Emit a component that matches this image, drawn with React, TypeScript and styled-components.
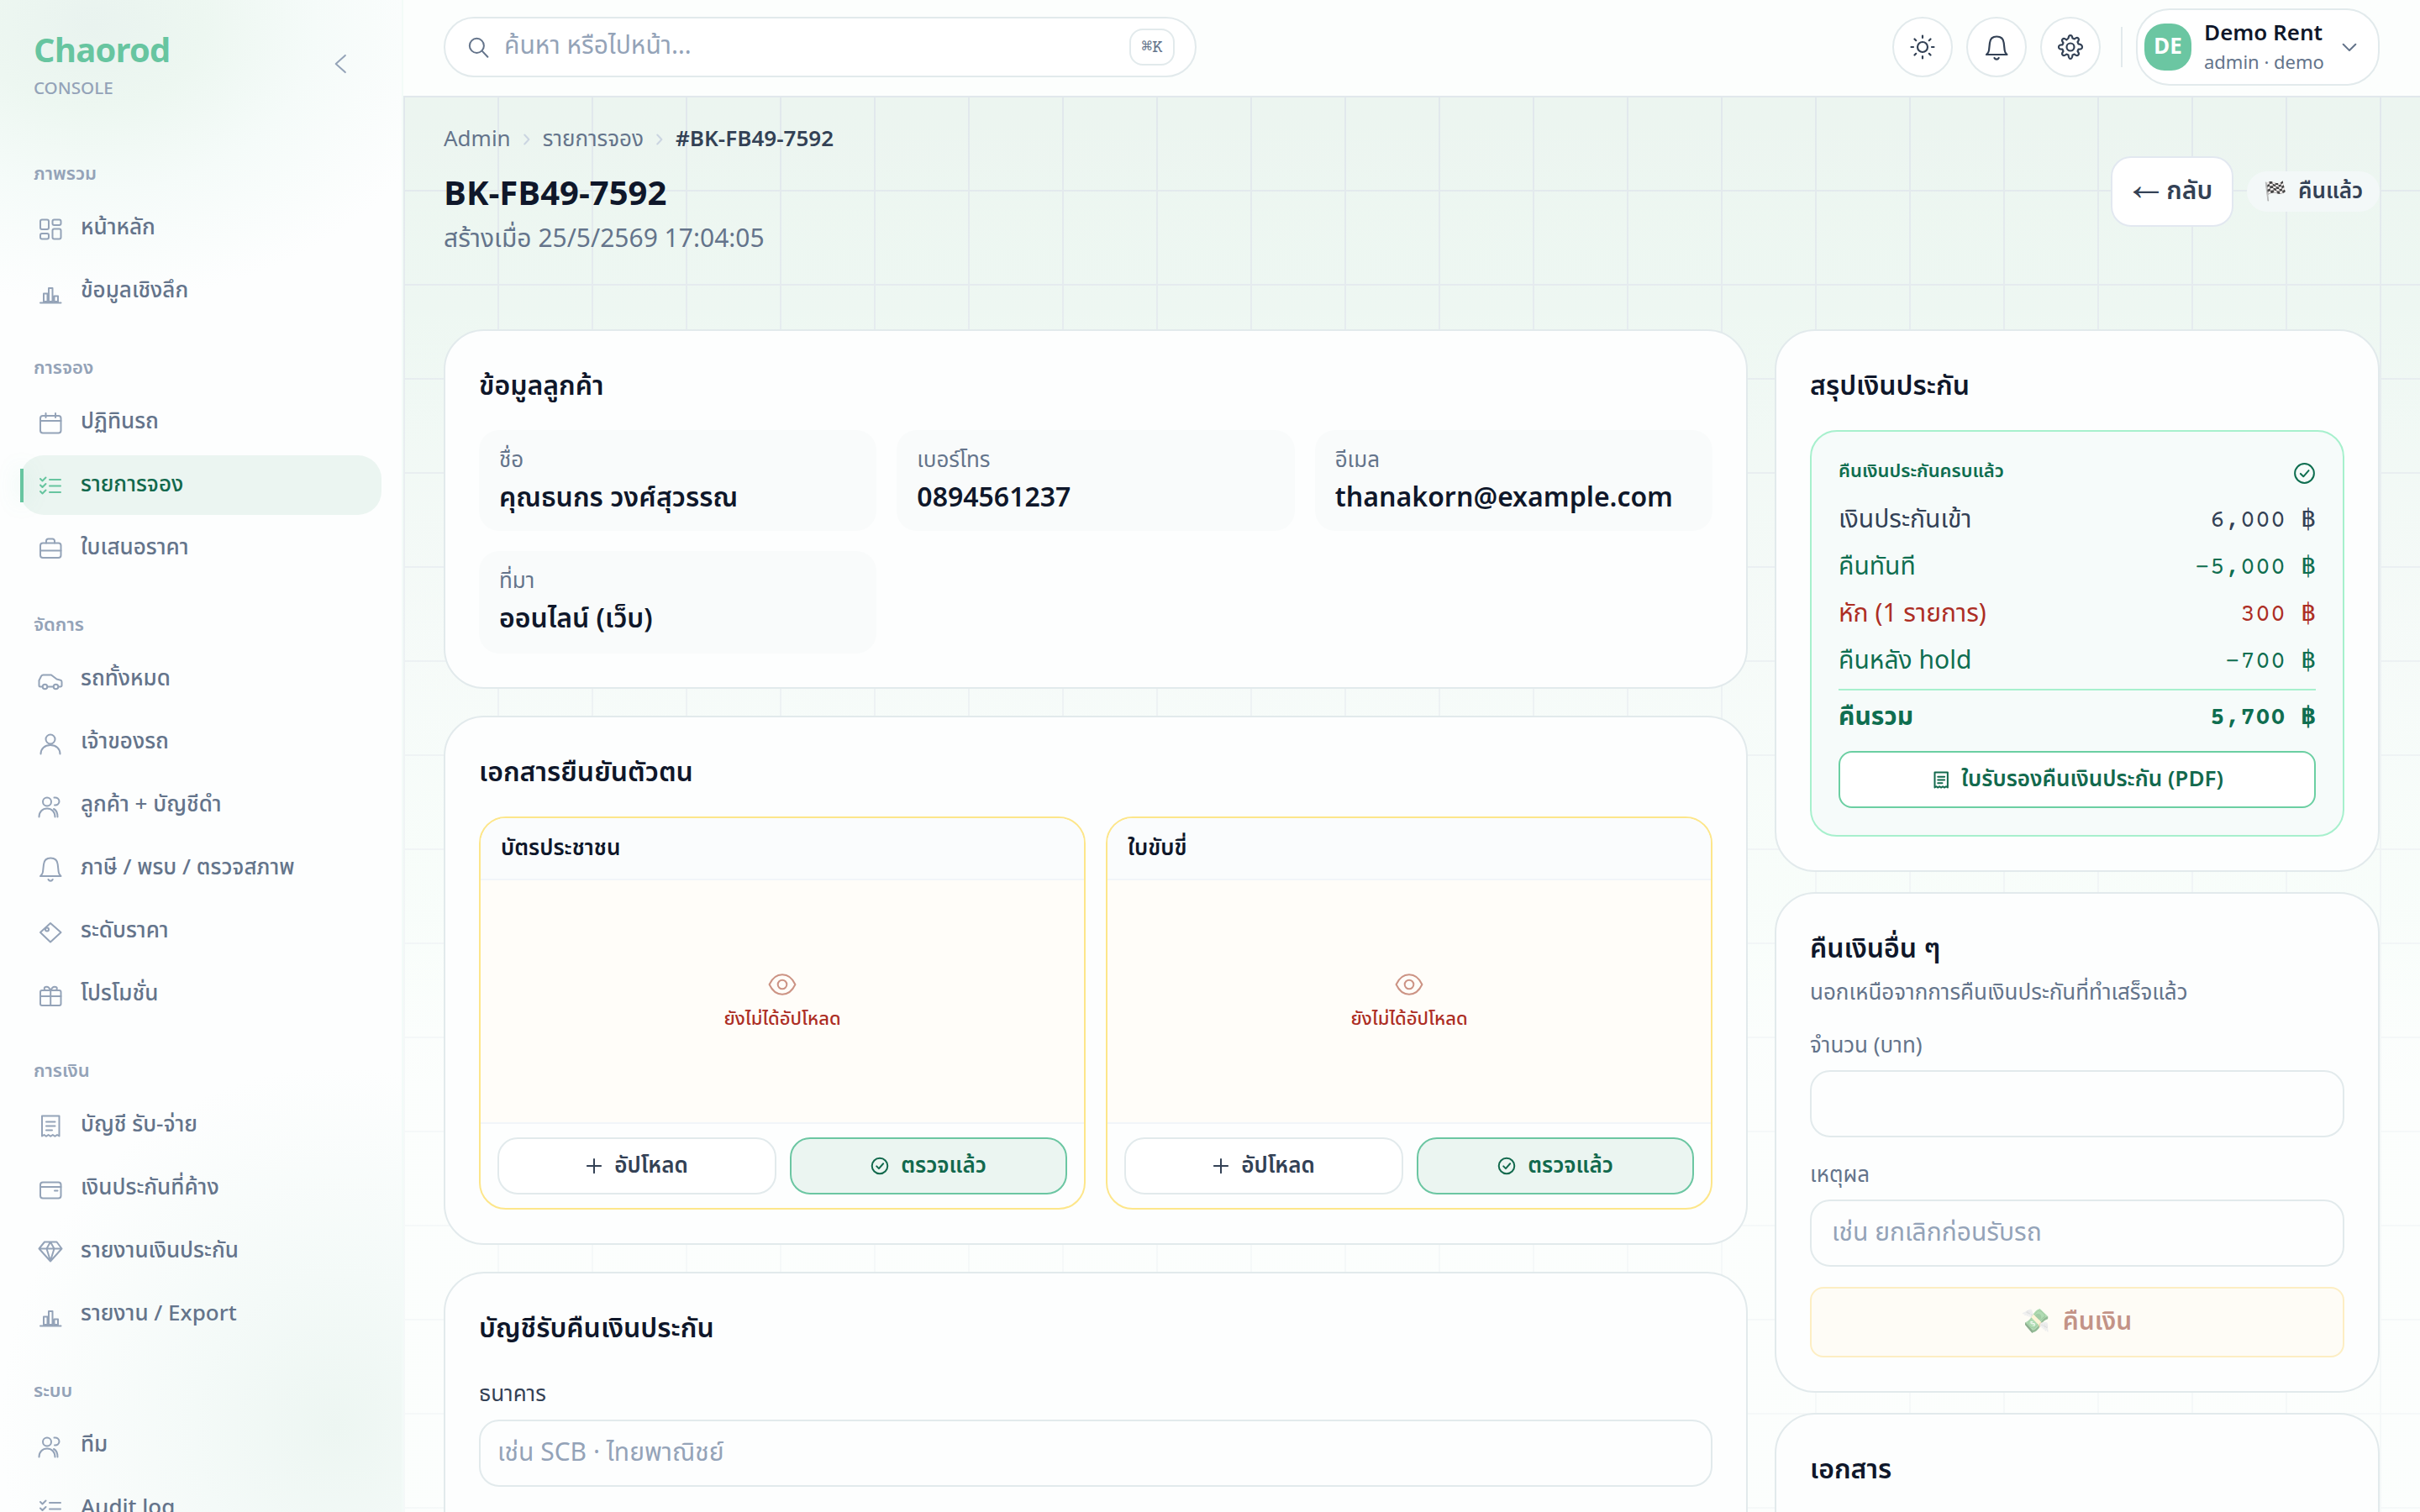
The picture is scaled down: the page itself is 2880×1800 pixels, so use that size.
import {ReactNode} from "react";
import styled, {createGlobalStyle} from "styled-components";

const sans = `"Noto Sans Thai", "Noto Sans", sans-serif`;
const mono = `"Courier Prime", "DejaVu Sans Mono", "Liberation Mono", monospace`;
const money = `"Courier Prime", FreeSans, "Noto Sans", "Liberation Mono", monospace`;

type IconProps = { name: string; size?: number; stroke?: number };

// every glyph is drawn on a 32 unit canvas
const shapes: Record<string, ReactNode> = {
	grid: <><rect x="4" y="5.500" width="10" height="11.500" rx="2" /><rect x="18.500" y="5.500" width="10" height="6.500" rx="2" /><rect x="4" y="22" width="10" height="6.500" rx="2" /><rect x="18.500" y="16.500" width="10" height="12" rx="2" /></>,
	chart: <path d="M4 29.500h24.500M8 28V18.500h4.500V28zM14 28V12h4.500v16zM20.500 28v-6.500H25V28z" />,
	calendar: <><rect x="4" y="8" width="24.500" height="20.500" rx="3" /><path d="M4 14h24.500M10.500 5v5M22 5v5" /></>,
	list: <path d="M4 8l2.500 2.500 4-4M4 15.500L6.500 18l4-4M4 23l2.500 2.500 4-4M15 9h13M15 16.500h13M15 24h13" />,
	briefcase: <><rect x="4" y="9.500" width="24.500" height="17.500" rx="3" /><path d="M4 18.500h24.500M11 9.500V7a2.500 2.500 0 012.500-2.500h5A2.500 2.500 0 0121 7v2.500" /></>,
	car: <><path d="M6.500 24.500H4a1.500 1.500 0 01-1.500-1.500v-6l2.500-5a3 3 0 012.500-1.500h9.500l6.500 5 4.500 1.200a2 2 0 011.500 2V23a1.500 1.500 0 01-1.500 1.500h-2M12.500 24.500h7" /><circle cx="9.500" cy="24.500" r="2.800" /><circle cx="22.500" cy="24.500" r="2.800" /></>,
	user: <><circle cx="16" cy="12" r="5.500" /><path d="M4.500 29.500c0-6 4.500-10.500 11.500-10.500s11.500 4.500 11.500 10.500" /></>,
	users: <><circle cx="12" cy="11.500" r="5" /><path d="M2.500 29.500c0-6 4-10 9.500-10s9.500 4 9.500 10M20.500 6.500c3.500-.5 6 1.500 6 4.500s-2.500 5-5.500 4.500M20 20c3 1.500 4.500 5 4.500 9.500" /></>,
	bell: <path d="M4 25h24.500c-1.800-1.500-2.600-3-2.800-5l-1-9c-.5-5-4-7.500-8.500-7.500S8.500 6 8 11l-1 9c-.2 2-1.200 3.500-3 5zM13.500 29c1.200 2.200 4 2.200 5.200 0" />,
	tag: <><path d="M4 17L16 6l12.500 11L16 28.500z" /><circle cx="12" cy="13.500" r="2" /></>,
	gift: <><rect x="4" y="11" width="24.500" height="18" rx="2" /><path d="M4 18h24.500M16.200 11v18M16 11c-1.500-4-4-4.700-6-4s-1.500 3 0 4M16.500 11c1.500-4 4-4.700 6-4s1.500 3 0 4" /></>,
	receipt: <path d="M6 4.500h20.500v24l-2.500-1.500-2.600 1.800-2.600-1.800-2.600 1.800-2.600-1.800-2.600 1.800-2.500-1.800L6 28.500zM11 11.500h10.500M11 16.500h10.500M11 21.500h7" />,
	wallet: <><rect x="4" y="8.500" width="24.500" height="19" rx="3" /><path d="M4 14h24.500M21 18.500h3.500" /></>,
	gem: <path d="M9 4.500h14.500l6 8L16 27.500 2.500 12.500zM2.500 12.500h27M11.500 12.500L16 27l4.500-14.500L16 4.500z" />,
	search: <><circle cx="14" cy="14" r="10.500" /><path d="M22 22l8 8.500" /></>,
	left: <path d="M21.500 6.500L11 16l10.500 9.500" />,
	right: <path d="M12 8l7.500 8-7.500 8" />,
	down: <path d="M7 12l9 9 9-9" />,
	sun: <><circle cx="16" cy="16" r="6" /><path d="M16 2.500v2.500M16 27v2.500M2.500 16H5M27 16h2.500M6.500 6.500l1.700 1.700M23.800 23.800l1.700 1.700M6.500 25.500l1.700-1.700M23.800 8.200l1.700-1.700" /></>,
	gear: <><circle cx="16" cy="16" r="4.500" /><path d="M13.500 5.500Q14 2 16 2t2.500 3.500l2.200 1q3-2.500 4.600-1t-.8 4.500l1 2.400Q30 13 30 16t-4.500 2.600l-1 2.400q2.500 3 .8 4.500t-4.600-1l-2.200 1Q18 30 16 30t-2.500-4.500l-2.200-1q-3 2.500-4.600 1t.8-4.500l-1-2.400Q2 19 2 16t4.500-2.600l1-2.400q-2.500-3-.8-4.500t4.600 1z" /></>,
	check: <><circle cx="16" cy="16" r="13.500" /><path d="M10.500 16.500l4 4 7.500-8.500" /></>,
	plus: <path d="M16 3v26M3 16h26" />,
	eye: <><path d="M1.500 16C5 8.500 10 5 16 5s11 3.500 14.500 11C27 23.500 22 27 16 27S5 23.500 1.500 16z" /><circle cx="16" cy="16" r="5" /></>,
};

function Icon({name, size = 32, stroke = 2}: IconProps) {
	return (
		<svg width={size} height={size} viewBox="0 0 32 32" fill="none" stroke="currentColor" strokeWidth={(stroke * 32) / size} strokeLinecap="round" strokeLinejoin="round">
			{shapes[name]}
		</svg>
	);
}

const menu = [
	{label: "ภาพรวม", items: [["grid", "หน้าหลัก"], ["chart", "ข้อมูลเชิงลึก"]]},
	{label: "การจอง", items: [["calendar", "ปฏิทินรถ"], ["list", "รายการจอง"], ["briefcase", "ใบเสนอราคา"]]},
	{label: "จัดการ", items: [["car", "รถทั้งหมด"], ["user", "เจ้าของรถ"], ["users", "ลูกค้า + บัญชีดำ"], ["bell", "ภาษี / พรบ / ตรวจสภาพ"], ["tag", "ระดับราคา"], ["gift", "โปรโมชั่น"]]},
	{label: "การเงิน", items: [["receipt", "บัญชี รับ-จ่าย"], ["wallet", "เงินประกันที่ค้าง"], ["gem", "รายงานเงินประกัน"], ["chart", "รายงาน / Export"]]},
	{label: "ระบบ", items: [["users", "ทีม"], ["list", "Audit log"]]},
];

const customer = [
	["ชื่อ", "คุณธนกร วงศ์สุวรรณ"],
	["เบอร์โทร", "0894561237"],
	["อีเมล", "thanakorn@example.com"],
	["ที่มา", "ออนไลน์ (เว็บ)"],
];

const deposit = [
	{label: "เงินประกันเข้า", value: "6,000 ฿", color: "#334155"},
	{label: "คืนทันที", value: "−5,000 ฿", color: "#0f6e50"},
	{label: "หัก (1 รายการ)", value: "300 ฿", color: "#ad2e24"},
	{label: "คืนหลัง hold", value: "−700 ฿", color: "#0f6e50"},
];

export default function App() {
	return (
		<Page>
			<GlobalStyle />
			<Sidebar>
				<Brand>
					<div>
						<Logo>Chaorod</Logo>
						<Console>CONSOLE</Console>
					</div>
					<Icon name="left" size={34} />
				</Brand>
				{menu.map((group) => (
					<Group key={group.label}>
						<GroupLabel>{group.label}</GroupLabel>
						{group.items.map(([icon, text]) => (
							<NavItem key={text} $active={text === "รายการจอง"}>
								<Icon name={icon} />
								<span>{text}</span>
							</NavItem>
						))}
					</Group>
				))}
			</Sidebar>

			<Main>
				<Topbar>
					<Search>
						<Icon name="search" size={26} />
						<span>ค้นหา หรือไปหน้า…</span>
						<Kbd>⌘K</Kbd>
					</Search>
					<Tools>
						<RoundButton><Icon name="sun" size={32} stroke={2.2} /></RoundButton>
						<RoundButton><Icon name="bell" size={32} stroke={2.2} /></RoundButton>
						<RoundButton><Icon name="gear" size={32} stroke={2.2} /></RoundButton>
						<Divider />
						<Profile>
							<Avatar>DE</Avatar>
							<ProfileText>
								<strong>Demo Rent</strong>
								<span>admin · demo</span>
							</ProfileText>
							<Icon name="down" size={26} />
						</Profile>
					</Tools>
				</Topbar>

				<Content>
					<Header>
						<div>
							<Crumbs>
								<span>Admin</span>
								<Icon name="right" size={22} />
								<span>รายการจอง</span>
								<Icon name="right" size={22} />
								<b>#BK-FB49-7592</b>
							</Crumbs>
							<Title>BK-FB49-7592</Title>
							<Created>สร้างเมื่อ 25/5/2569 17:04:05</Created>
						</div>
						<Actions>
							<BackButton><i>←</i>กลับ</BackButton>
							<Status><span>🏁</span>คืนแล้ว</Status>
						</Actions>
					</Header>

					<Columns>
						<Column $gap={32}>
							<Card $height={428}>
								<CardTitle>ข้อมูลลูกค้า</CardTitle>
								<Fields>
									{customer.map(([label, value]) => (
										<Field key={label}>
											<small>{label}</small>
											<strong>{value}</strong>
										</Field>
									))}
								</Fields>
							</Card>

							<Card $height={630}>
								<CardTitle>เอกสารยืนยันตัวตน</CardTitle>
								<Docs>
									{["บัตรประชาชน", "ใบขับขี่"].map((doc) => (
										<Doc key={doc}>
											<DocTitle>{doc}</DocTitle>
											<DocEmpty>
												<Icon name="eye" size={34} />
												<span>ยังไม่ได้อัปโหลด</span>
											</DocEmpty>
											<DocActions>
												<DocButton><Icon name="plus" size={20} />อัปโหลด</DocButton>
												<DocButton $done><Icon name="check" size={22} />ตรวจแล้ว</DocButton>
											</DocActions>
										</Doc>
									))}
								</Docs>
							</Card>

							<Card $height={600}>
								<CardTitle>บัญชีรับคืนเงินประกัน</CardTitle>
								<BankLabel>ธนาคาร</BankLabel>
								<Input placeholder="เช่น SCB · ไทยพาณิชย์" $pad={20} />
							</Card>
						</Column>

						<Column $gap={24}>
							<Card $height={646}>
								<CardTitle>สรุปเงินประกัน</CardTitle>
								<Summary>
									<SummaryHead>คืนเงินประกันครบแล้ว<Icon name="check" size={27} /></SummaryHead>
									{deposit.map((row) => (
										<Row key={row.label} $color={row.color}>
											<span>{row.label}</span>
											<Amount>{row.value}</Amount>
										</Row>
									))}
									<Total $color="#0f6e50">
										<span>คืนรวม</span>
										<Amount>5,700 ฿</Amount>
									</Total>
									<PdfButton><Icon name="receipt" size={24} />ใบรับรองคืนเงินประกัน (PDF)</PdfButton>
								</Summary>
							</Card>

							<Card $height={596}>
								<CardTitle>คืนเงินอื่น ๆ</CardTitle>
								<Hint>นอกเหนือจากการคืนเงินประกันที่ทำเสร็จแล้ว</Hint>
								<Label>จำนวน (บาท)</Label>
								<Input $pad={24} />
								<Label>เหตุผล</Label>
								<Input placeholder="เช่น ยกเลิกก่อนรับรถ" $pad={24} />
								<RefundButton><span>💸</span>คืนเงิน</RefundButton>
							</Card>

							<Card $height={400}>
								<CardTitle>เอกสาร</CardTitle>
							</Card>
						</Column>
					</Columns>
				</Content>
			</Main>
		</Page>
	);
}

const GlobalStyle = createGlobalStyle`
  * { box-sizing: border-box; }
  body {
    margin: 0;
    font-family: ${sans};
    color: #0f172a;
  }
  svg { flex: none; display: block; }
`;

const Page = styled.div`
  display: flex;
  width: 2880px;
  height: 1800px;
  overflow: hidden;
  background: #fff;
`;

const Sidebar = styled.aside`
  flex: none;
  width: 480px;
  height: 1800px;
  overflow: hidden;
  border-right: 2px solid #f3fbf8;
  background:
    radial-gradient(440px 330px at 110px 30px, #e9f3ef 0%, #edf7f1 30%, #f5fbf9 60%, rgba(255, 255, 255, 0) 100%),
    radial-gradient(400px 430px at 400px 1700px, #edf6f2 0%, #f4faf8 42%, rgba(255, 255, 255, 0) 100%),
    #fdfefe;
`;

const Brand = styled.div`
  display: flex;
  justify-content: space-between;
  align-items: center;
  height: 151px;
  padding: 0 56px 0 40px;
  color: #94a3b8;

  div { padding-top: 2px; }
`;

const Logo = styled.div`
  font-size: 40px;
  font-weight: 700;
  line-height: 54px;
  letter-spacing: -0.02em;
  color: #67c5a0;
`;

const Console = styled.div`
  font-size: 20.6px;
  font-weight: 500;
  line-height: 30px;
`;

const Group = styled.nav`
  display: flex;
  flex-direction: column;
  gap: 4px;
  padding: 0 24px;
  margin-top: 40px;
`;

const GroupLabel = styled.div`
  padding-left: 16px;
  margin-bottom: 8px;
  font-size: 22px;
  font-weight: 600;
  line-height: 33px;
  color: #94a3b8;
`;

const NavItem = styled.div<{ $active: boolean }>`
  position: relative;
  display: flex;
  align-items: center;
  gap: 20px;
  height: 71px;
  padding-left: 20px;
  border-radius: 28px;
  font-size: 26px;
  font-weight: 500;
  background: ${(p) => (p.$active ? "#ebf5f1" : "none")};
  color: ${(p) => (p.$active ? "#12694d" : "#64748b")};

  svg { color: ${(p) => (p.$active ? "#67c5a0" : "#94a3b8")}; }
  span { padding-bottom: 2px; }

  &::before {
    content: "";
    display: ${(p) => (p.$active ? "block" : "none")};
    position: absolute;
    left: 0;
    top: 16px;
    width: 4px;
    height: 40px;
    background: #67c5a0;
    box-shadow: 0 0 24px rgba(103, 197, 160, 0.35);
  }
`;

const Main = styled.main`
  flex: 1;
  display: flex;
  flex-direction: column;
`;

const Topbar = styled.header`
  flex: none;
  display: flex;
  justify-content: space-between;
  align-items: center;
  height: 114px;
  padding: 0 48px 2px;
  background: #fcfefd;
`;

const Search = styled.div`
  display: flex;
  align-items: center;
  width: 896px;
  height: 72px;
  padding: 0 24px 0 26px;
  border: 2px solid #e2eaec;
  border-radius: 36px;
  background: #fff;
  color: #64748b;

  span {
    flex: 1;
    margin-left: 18px;
    padding-bottom: 2px;
    font-size: 30px;
    line-height: 44px;
    color: #94a3b8;
  }
`;

const Kbd = styled.kbd`
  display: grid;
  place-items: center;
  width: 54px;
  height: 44px;
  border: 2px solid #e2eaec;
  border-radius: 16px;
  font-family: ${mono};
  font-size: 21px;
  font-weight: 500;
`;

const Tools = styled.div`
  display: flex;
  align-items: center;
  gap: 16px;
`;

const RoundButton = styled.div`
  display: grid;
  place-items: center;
  width: 72px;
  height: 72px;
  border: 2px solid #e2eaec;
  border-radius: 50%;
  background: #fff;
  color: #334155;
`;

const Divider = styled.div`
  width: 2px;
  height: 48px;
  margin-left: 8px;
  background: #e2eaec;
`;

const Profile = styled.div`
  display: flex;
  align-items: center;
  width: 290px;
  height: 92px;
  padding-left: 8px;
  border: 2px solid #e2eaec;
  border-radius: 40px;
  background: #fff;
  color: #64748b;
`;

const Avatar = styled.div`
  display: grid;
  place-items: center;
  width: 56px;
  height: 56px;
  margin-right: 15px;
  border-radius: 24px;
  background: #6bc6a2;
  font-size: 26px;
  font-weight: 700;
  color: #fff;
`;

const ProfileText = styled.div`
  display: flex;
  flex-direction: column;
  width: 160px;
  padding-top: 2px;

  strong {
    font-size: 26px;
    font-weight: 600;
    line-height: 38px;
    color: #0f172a;
  }

  span {
    font-size: 22px;
    line-height: 34px;
  }
`;

const Content = styled.section`
  flex: 1;
  min-height: 0;
  padding: 0 48px;
  background:
    linear-gradient(to bottom, rgba(252, 254, 253, 0) 0%, rgba(252, 254, 253, 0.75) 70%, rgba(252, 254, 253, 0.75) 100%),
    linear-gradient(to right, #e1e8ec 2px, transparent 2px) 0 0 / 112px 112px,
    linear-gradient(to bottom, #e1e8ec 2px, transparent 2px) 0 0 / 112px 112px,
    linear-gradient(to bottom, #ecf5f0 0%, #ebf6f0 15%, #f1f8f5 38%, #f2fcf6 58%, #fbfefc 70%);
`;

const Header = styled.div`
  display: flex;
  justify-content: space-between;
  height: 278px;
`;

const Crumbs = styled.div`
  display: flex;
  align-items: center;
  gap: 8px;
  margin-top: 32px;
  font-size: 26px;
  line-height: 40px;
  color: #64748b;

  svg { color: #cbd5e1; }
  b { font-weight: 600; color: #334155; }
`;

const Title = styled.h1`
  margin: 18px 0 0;
  font-size: 40px;
  font-weight: 700;
  line-height: 56px;
`;

const Created = styled.div`
  margin-top: 2px;
  font-size: 30px;
  line-height: 46px;
  color: #64748b;
`;

const Actions = styled.div`
  display: flex;
  align-items: center;
  gap: 16px;
  height: 84px;
  margin-top: 72px;
`;

const BackButton = styled.div`
  display: flex;
  align-items: center;
  justify-content: center;
  gap: 8px;
  width: 146px;
  height: 84px;
  padding-bottom: 1px;
  border: 2px solid #e2e8f0;
  border-radius: 24px;
  background: #fff;
  font-size: 30px;
  font-weight: 600;
  line-height: 40px;
  color: #334155;

  i {
    font-family: "Noto Sans Math", sans-serif;
    font-size: 33px;
    font-style: normal;
  }
`;

const Status = styled.div`
  display: flex;
  align-items: center;
  gap: 14px;
  width: 158px;
  height: 48px;
  padding-left: 20px;
  border-radius: 24px;
  background: #f3f8f8;
  font-size: 26px;
  font-weight: 600;
  color: #334155;

  span { font-size: 22px; }
`;

const Columns = styled.div`
  display: grid;
  grid-template-columns: 1552px 720px;
  gap: 32px;
`;

const Column = styled.div<{ $gap: number }>`
  display: flex;
  flex-direction: column;
  gap: ${(p) => p.$gap}px;
`;

const Card = styled.section<{ $height: number }>`
  flex: none;
  height: ${(p) => p.$height}px;
  padding: 40px;
  border: 2px solid #e2eaec;
  border-radius: 48px;
  background: #fdfefe;
`;

const CardTitle = styled.h2`
  height: 54px;
  margin: 0;
  font-size: 32px;
  font-weight: 600;
  line-height: 52px;
`;

const Fields = styled.div`
  display: grid;
  grid-template-columns: repeat(3, 1fr);
  grid-template-rows: 120px 122px;
  gap: 24px;
  margin-top: 24px;
`;

const Field = styled.div`
  display: flex;
  flex-direction: column;
  padding: 15px 24px;
  border-radius: 24px;
  background: #f9fbfb;

  small {
    font-size: 26px;
    line-height: 42px;
    color: #64748b;
  }

  strong {
    font-size: 32px;
    font-weight: 600;
    line-height: 48px;
  }
`;

const Docs = styled.div`
  display: grid;
  grid-template-columns: 1fr 1fr;
  gap: 24px;
  margin-top: 24px;
`;

const Doc = styled.div`
  height: 468px;
  border: 2px solid #fde68a;
  border-radius: 32px;
  overflow: hidden;
`;

const DocTitle = styled.div`
  height: 74px;
  padding-left: 24px;
  border-bottom: 2px solid #f1f5f9;
  background: #fafcfd;
  font-size: 26px;
  font-weight: 600;
  line-height: 72px;
`;

const DocEmpty = styled.div`
  display: flex;
  flex-direction: column;
  align-items: center;
  justify-content: center;
  gap: 8px;
  height: 288px;
  background: #fffdf9;
  color: #ad2e24;
  font-size: 22px;
  font-weight: 500;

  svg { color: #cc9384; }
`;

const DocActions = styled.div`
  display: flex;
  gap: 16px;
  padding: 16px 20px;
  border-top: 2px solid #f1f5f9;
`;

const DocButton = styled.div<{ $done?: boolean }>`
  width: ${(p) => (p.$done ? 330 : 332)}px;
  display: flex;
  align-items: center;
  justify-content: center;
  gap: 14px;
  height: 68px;
  border: 2px solid ${(p) => (p.$done ? "#6bc6a2" : "#e2eaec")};
  border-radius: 24px;
  background: ${(p) => (p.$done ? "#ebf5f1" : "#fff")};
  color: ${(p) => (p.$done ? "#12694d" : "#334155")};
  font-size: 26px;
  font-weight: 600;
`;

const BankLabel = styled.div`
  margin: 28px 0 8px;
  font-size: 26px;
  line-height: 44px;
  color: #334155;
`;

const Input = styled.input<{ $pad: number }>`
  display: block;
  width: 100%;
  height: 80px;
  padding: 0 ${(p) => p.$pad}px;
  border: 2px solid #e2eaec;
  border-radius: 24px;
  background: #fdfefe;
  font-family: inherit;
  font-size: 30px;

  &::placeholder { color: #94a3b8; }
`;

const Summary = styled.div`
  height: 484px;
  margin-top: 24px;
  padding: 32px;
  border: 2px solid #a7f0cd;
  border-radius: 32px;
  background: #f6fbfa;
`;

const SummaryHead = styled.div`
  display: flex;
  justify-content: space-between;
  height: 44px;
  font-size: 22px;
  font-weight: 600;
  line-height: 32px;
  color: #0f6e50;

  svg { margin-top: 4px; }
`;

const Row = styled.div<{ $color: string }>`
  display: flex;
  justify-content: space-between;
  height: 56px;
  font-size: 30px;
  line-height: 59px;
  color: ${(p) => p.$color};
`;

const Total = styled(Row)`
  height: 74px;
  margin-top: 6px;
  padding-top: 3px;
  border-top: 2px solid #a7f0cd;
  font-weight: 700;
`;

const Amount = styled.span`
  font-family: ${money};
  line-height: 61px;
`;

const PdfButton = styled.div`
  display: flex;
  align-items: center;
  justify-content: center;
  gap: 12px;
  height: 68px;
  border: 2px solid #6bcfa2;
  border-radius: 16px;
  background: #fff;
  color: #12694d;
  font-size: 26px;
  font-weight: 600;
`;

const Hint = styled.div`
  height: 42px;
  font-size: 26px;
  line-height: 48px;
  color: #64748b;
`;

const Label = styled.div`
  height: 74px;
  padding-top: 22px;
  font-size: 26px;
  line-height: 46px;
  color: #64748b;
`;

const RefundButton = styled.div`
  display: flex;
  align-items: center;
  justify-content: center;
  gap: 15px;
  height: 84px;
  margin-top: 24px;
  padding: 0 2px 1px 0;
  border: 2px solid #fde08a;
  border-radius: 16px;
  background: #fffbf0;
  color: #8a2a10;
  font-size: 30px;
  font-weight: 600;
  opacity: 0.5;

  span { font-size: 28px; }
`;
